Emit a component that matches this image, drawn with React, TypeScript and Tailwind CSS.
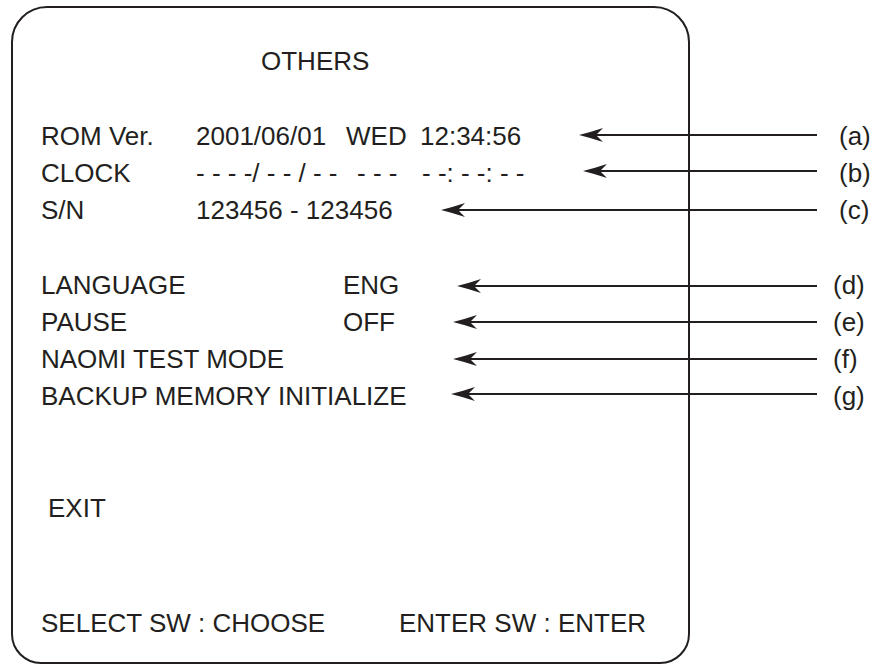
import React from "react";

// arrow tips (x) and line heights (y) for the callouts, measured from the sheet
const ARROWS = [
  { tip: 579, y: 135 },
  { tip: 583, y: 171 },
  { tip: 441, y: 210 },
  { tip: 457, y: 286 },
  { tip: 453, y: 322 },
  { tip: 453, y: 359 },
  { tip: 451, y: 394 },
];

const LINE_END = 817;

function Arrow({ tip, y }: { tip: number; y: number }) {
  const head = `M ${tip} ${y} Q ${tip + 12} ${y - 3} ${tip + 24} ${y - 7} L ${tip + 17} ${y} L ${tip + 24} ${y + 7} Q ${tip + 12} ${y + 3} ${tip} ${y} Z`;
  return (
    <g>
      <line x1={tip + 16} y1={y} x2={LINE_END} y2={y} stroke="#231f20" strokeWidth={2} />
      <path d={head} fill="#231f20" />
    </g>
  );
}

export default function App() {
  return (
    <div className="relative w-[874px] h-[665px] bg-white text-[#231f20] font-['Liberation_Sans',Arial,sans-serif] text-[26px] leading-[37px]">
      <div className="flex pt-[6px] pl-[11px]">
        {/* menu screen */}
        <div className="w-[679px] h-[658px] border-2 border-[#231f20] rounded-t-[36px] rounded-b-[30px] pt-[35px] pl-[28px] flex flex-col">
          <div className="ml-[220px]">OTHERS</div>

          <div className="mt-[38px] flex flex-col">
            <div className="flex whitespace-pre">
              <span className="w-[155px]">ROM Ver.</span>
              <span className="w-[150px]">2001/06/01</span>
              <span className="w-[74px]">WED</span>
              <span>12:34:56</span>
            </div>
            <div className="flex whitespace-pre">
              <span className="w-[155px]">CLOCK</span>
              <span className="w-[161px]">- - - -/ - - / - -</span>
              <span className="w-[65px]">- - -</span>
              <span>- -: - -: - -</span>
            </div>
            <div className="flex whitespace-pre">
              <span className="w-[155px]">S/N</span>
              <span>123456 - 123456</span>
            </div>
          </div>

          <div className="mt-[38px] flex flex-col">
            <div className="flex">
              <span className="w-[302px]">LANGUAGE</span>
              <span>ENG</span>
            </div>
            <div className="flex">
              <span className="w-[302px]">PAUSE</span>
              <span>OFF</span>
            </div>
            <div>NAOMI TEST MODE</div>
            <div>BACKUP MEMORY INITIALIZE</div>
          </div>

          <div className="mt-[75px] ml-[7px]">EXIT</div>

          <div className="mt-[78px] flex">
            <span className="w-[358px]">SELECT SW : CHOOSE</span>
            <span>ENTER SW : ENTER</span>
          </div>
        </div>

        {/* callout letters */}
        <div className="pt-[112px] flex flex-col">
          <div className="pl-[149px]">(a)</div>
          <div className="pl-[149px]">(b)</div>
          <div className="pl-[149px]">(c)</div>
          <div className="mt-[38px] pl-[143px]">(d)</div>
          <div className="pl-[143px]">(e)</div>
          <div className="pl-[143px]">(f)</div>
          <div className="pl-[143px]">(g)</div>
        </div>
      </div>

      {/* leader arrows drawn over the screen frame */}
      <svg className="absolute inset-0 pointer-events-none" width={874} height={665}>
        {ARROWS.map((a, i) => (
          <Arrow key={i} tip={a.tip} y={a.y} />
        ))}
      </svg>
    </div>
  );
}
